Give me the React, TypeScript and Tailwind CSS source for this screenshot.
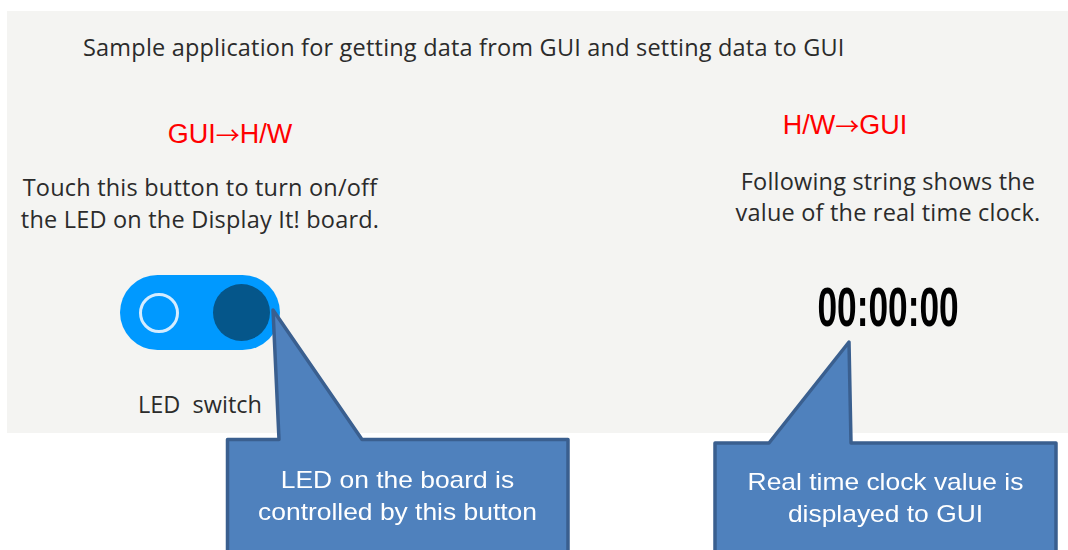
import React from "react";

const guiFont = { fontFamily: '"Open Sans", "Noto Sans", sans-serif' };
const arrowFont = { fontFamily: '"Noto Sans CJK JP", sans-serif' };

export default function App() {
  return (
    <div className="relative w-[1068px] h-[550px] bg-white overflow-hidden" style={{ fontFamily: '"Liberation Sans", Arial, sans-serif' }}>
      <div className="ml-[7px] mt-[11px] w-[1061px] h-[422px] bg-[#f4f4f2] flex flex-col text-[#2b2b2b]">
        <div className="pl-[76px] pt-[22px] h-[50px] text-[23.5px] leading-[28px] tracking-[0.2px] whitespace-nowrap" style={guiFont}>
          Sample application for getting data from GUI and setting data to GUI
        </div>
        <div className="flex items-start">
          {/* left column */}
          <div className="w-[386px] flex flex-col items-center">
            <div className="mt-[59px] ml-[60px] flex items-center text-[27px] leading-[28px] text-[#ff0000]">
              <span>GUI</span>
              <span className="text-[24px] leading-[28px] mx-[0px]" style={arrowFont}>→</span>
              <span>H/W</span>
            </div>
            <div className="mt-[23px] text-[23.5px] leading-[32px] tracking-[0.2px] text-center whitespace-nowrap" style={guiFont}>
              <div>Touch this button to turn on/off</div>
              <div>the LED on the Display It! board.</div>
            </div>
            <div className="mt-[40px] w-[160px] h-[75px] rounded-full bg-[#0099ff] blur-[0.6px] flex items-center justify-between pl-[19px] pr-[10px]">
              <div className="w-[40px] h-[40px] rounded-full border-[3px] border-[#d4ecff]" />
              <div className="w-[57px] h-[57px] rounded-full bg-[#05568a]" />
            </div>
            <div className="mt-[40px] text-[23.5px] leading-[28px] whitespace-pre" style={guiFont}>
              {"LED  switch"}
            </div>
          </div>
          <div className="flex-1" />
          {/* right column */}
          <div className="w-[360px] flex flex-col items-center">
            <div className="mt-[50px] mr-[86px] flex items-center text-[27px] leading-[28px] text-[#ff0000]">
              <span>H/W</span>
              <span className="text-[24px] leading-[28px]" style={arrowFont}>→</span>
              <span>GUI</span>
            </div>
            <div className="mt-[27px] text-[23.5px] leading-[31px] tracking-[0.2px] text-center whitespace-nowrap" style={guiFont}>
              <div>Following string shows the</div>
              <div>value of the real time clock.</div>
            </div>
            <div className="mt-[51px] text-[56px] leading-[56px] font-bold text-black scale-x-[0.63]">
              00:00:00
            </div>
          </div>
        </div>
      </div>

      {/* callout shapes */}
      <svg className="absolute left-0 top-0" width="1068" height="550" viewBox="0 0 1068 550">
        <path
          d="M 227.5 439.5 L 279 439.5 L 273 310 L 362 439.5 L 568 439.5 L 568 570 L 227.5 570 Z"
          fill="#4f81bd"
          stroke="#3a5f8f"
          strokeWidth="3.5"
          strokeLinejoin="round"
        />
        <path
          d="M 715 443 L 769 443 L 849 342 L 851 443 L 1056 443 L 1056 570 L 715 570 Z"
          fill="#4f81bd"
          stroke="#3a5f8f"
          strokeWidth="3.5"
          strokeLinejoin="round"
        />
      </svg>

      <div className="absolute left-[227px] top-[464px] w-[341px] text-center text-white text-[24px] leading-[32px]">
        <div className="scale-x-[1.1]">LED on the board is</div>
        <div className="scale-x-[1.1]">controlled by this button</div>
      </div>
      <div className="absolute left-[715px] top-[466px] w-[341px] text-center text-white text-[24px] leading-[32px]">
        <div className="scale-x-[1.1]">Real time clock value is</div>
        <div className="scale-x-[1.1]">displayed to GUI</div>
      </div>
    </div>
  );
}
